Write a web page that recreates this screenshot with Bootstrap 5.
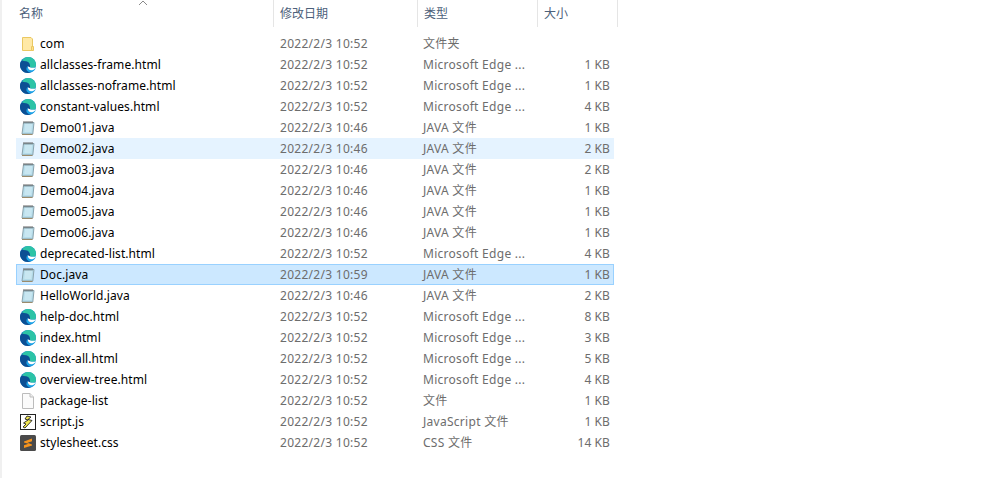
<!DOCTYPE html>
<html>
<head>
  <title>文件列表</title>
  <meta charset="UTF-8">
  <link href="https://cdn.jsdelivr.net/npm/bootstrap@5.3.2/dist/css/bootstrap.min.css" rel="stylesheet">
  <style>
    body {
      margin: 0;
      background: #fff;
      color: #000;
      font-family: "Noto Sans", "Noto Sans CJK SC", sans-serif;
      font-size: 12px;
      line-height: 21px;
      overflow: hidden;
    }
    .explorer {
      height: 478px;
      border-left: 2px solid #f0f0f0;
      padding-left: 14px;
    }
    .head-row {
      position: relative;
      height: 27px;
      margin-bottom: 6px;
      color: #4c607a;
    }
    .sort-arrow {
      position: absolute;
      left: 122px;
      top: 0;
    }
    .head-cell {
      height: 27px;
      line-height: 27px;
      border-right: 1px solid #e5e5e5;
      padding-left: 6px;
    }
    .file-row {
      width: 598px;
      height: 21px;
      border: 1px solid transparent;
      white-space: nowrap;
    }
    .file-row.hovered { background: #e5f3ff; border-color: #e5f3ff; }
    .file-row.selected { background: #cce8ff; border-color: #99d1ff; }
    .col-name { width: 263px; letter-spacing: .08px; }
    .col-date { width: 143px; color: #6d6d6d; letter-spacing: .28px; }
    .col-type { width: 114px; color: #6d6d6d; letter-spacing: .28px; }
    .col-size { width: 73px; color: #6d6d6d; text-align: right; letter-spacing: .1px; }
    .name-cell { padding-left: 3px; gap: 4px; }
    .name-cell svg { flex: none; }
    .w-name { width: 258px; padding-left: 3px; }
    .w-date { width: 144px; }
    .w-type { width: 120px; }
    .w-size { width: 80px; }
  </style>
</head>
<body>
<svg width="0" height="0" class="position-absolute">
  <defs>
    <symbol id="ic-folder" viewBox="0 0 16 16">
      <path d="M2.500 1.500h8.500l1.500 1.500v11.500h-10z" fill="#ffe9a6" stroke="#eac862"/>
      <path d="M11.500 14.500v-4h2v4z" fill="#ffe08a" stroke="#eac862"/>
    </symbol>
    <symbol id="ic-edge" viewBox="0 0 16 16">
      <circle cx="8" cy="8" r="8" fill="#1483d0"/>
      <path d="M0 8C0 4 3.500 1.500 7.500 1.500c3 0 4.500 2.500 4 5-1 3-1 6 .5 8.100C10.500 15.500 9 16 8 16 3.500 16 0 12.500 0 8z" fill="#0c4f94"/>
      <path d="M2 3.500C3.500 1.300 5.700 0 8 0c4.600 0 8 3.500 8 8 0 1.500-.8 2.500-2.500 2.700-1.500.2-3-.3-3.500-.7.500-2.500-1-5.500-4-5.800C4.500 4 3 3.800 2 3.500z" fill="#2cc3a6"/>
      <path d="M7.500 9c.2 3 3 5 6.500 3.300.7-.3 1.300-.9 1.700-1.600-.4 2.600-3.200 5-6.500 4.300C6.500 14.300 5.500 11.500 7.500 9z" fill="#1aa3e8"/>
      <path d="M7.800 9.200c1.500 1.200 4.800 2 7.900 1.200-.6 1.300-2 2.600-3.700 2.900-2.500.4-4.300-1.500-4.200-4.100z" fill="#fff"/>
    </symbol>
    <symbol id="ic-java" viewBox="0 0 16 16">
      <path d="M3.500 2.500h10.500l-1.200 11.500H2z" fill="#b5dcea" stroke="#8aa3ad"/>
      <path d="M5 5h7M4.800 7h7M4.600 9h7M4.400 11h7" stroke="#dcf1f8"/>
      <path d="M4 1v2.500M6 1v2.500M8 1v2.500M10 1v2.500M12 1v2.500" stroke="#666"/>
      <path d="M2 14.500h10.500" stroke="#9a8b6c"/>
    </symbol>
    <symbol id="ic-file" viewBox="0 0 16 16">
      <path d="M2.500 .5h7.500l3.500 3.500v11.500h-11z" fill="#fbfbfb" stroke="#bcbcbc"/>
      <path d="M10 .5v3.500h3.500" fill="#eee" stroke="#bcbcbc"/>
    </symbol>
    <symbol id="ic-js" viewBox="0 0 16 16">
      <rect x=".5" y=".5" width="15" height="15" fill="#fff" stroke="#222"/>
      <path d="M7 2l4 1-3 2.500 4 1L5 14l-2-1 3-3-2.500-1L8 6 5 5z" fill="#f2e650" stroke="#222" stroke-width=".9"/>
    </symbol>
    <symbol id="ic-css" viewBox="0 0 16 16">
      <rect width="16" height="16" rx="1.500" fill="#4a4a4a"/>
      <path d="M4 6.500 12 3.500v2.700L7.500 7.800 12 9.500v1L4 13v-2.700l4.500-1.600L4 7.500z" fill="#f7941d"/>
    </symbol>
  </defs>
</svg>

<div class="explorer">
  <div class="head-row d-flex">
    <svg class="sort-arrow" width="10" height="6" viewBox="0 0 10 6"><path d="M1 5l4-4 4 4" fill="none" stroke="#8a8a8a"/></svg>
    <div class="head-cell w-name">名称</div>
    <div class="head-cell w-date">修改日期</div>
    <div class="head-cell w-type">类型</div>
    <div class="head-cell w-size">大小</div>
  </div>
  <div id="fileList"></div>
</div>

<script>
const edge = 'Microsoft Edge ...';
const files = [
  ['com', 'folder', '2022/2/3 10:52', '文件夹', ''],
  ['allclasses-frame.html', 'edge', '2022/2/3 10:52', edge, '1 KB'],
  ['allclasses-noframe.html', 'edge', '2022/2/3 10:52', edge, '1 KB'],
  ['constant-values.html', 'edge', '2022/2/3 10:52', edge, '4 KB'],
  ['Demo01.java', 'java', '2022/2/3 10:46', 'JAVA 文件', '1 KB'],
  ['Demo02.java', 'java', '2022/2/3 10:46', 'JAVA 文件', '2 KB', 'hovered'],
  ['Demo03.java', 'java', '2022/2/3 10:46', 'JAVA 文件', '2 KB'],
  ['Demo04.java', 'java', '2022/2/3 10:46', 'JAVA 文件', '1 KB'],
  ['Demo05.java', 'java', '2022/2/3 10:46', 'JAVA 文件', '1 KB'],
  ['Demo06.java', 'java', '2022/2/3 10:46', 'JAVA 文件', '1 KB'],
  ['deprecated-list.html', 'edge', '2022/2/3 10:52', edge, '4 KB'],
  ['Doc.java', 'java', '2022/2/3 10:59', 'JAVA 文件', '1 KB', 'selected'],
  ['HelloWorld.java', 'java', '2022/2/3 10:46', 'JAVA 文件', '2 KB'],
  ['help-doc.html', 'edge', '2022/2/3 10:52', edge, '8 KB'],
  ['index.html', 'edge', '2022/2/3 10:52', edge, '3 KB'],
  ['index-all.html', 'edge', '2022/2/3 10:52', edge, '5 KB'],
  ['overview-tree.html', 'edge', '2022/2/3 10:52', edge, '4 KB'],
  ['package-list', 'file', '2022/2/3 10:52', '文件', '1 KB'],
  ['script.js', 'js', '2022/2/3 10:52', 'JavaScript 文件', '1 KB'],
  ['stylesheet.css', 'css', '2022/2/3 10:52', 'CSS 文件', '14 KB']
];

document.getElementById('fileList').innerHTML = files.map(f => `
  <div class="file-row d-flex align-items-center ${f[5] || ''}">
    <div class="col-name name-cell d-flex align-items-center">
      <svg width="16" height="16"><use href="#ic-${f[1]}"></use></svg><span>${f[0]}</span>
    </div>
    <div class="col-date">${f[2]}</div>
    <div class="col-type">${f[3]}</div>
    <div class="col-size">${f[4]}</div>
  </div>`).join('');
</script>

<script src="https://cdn.jsdelivr.net/npm/bootstrap@5.3.2/dist/js/bootstrap.bundle.min.js"></script>
</body>
</html>
